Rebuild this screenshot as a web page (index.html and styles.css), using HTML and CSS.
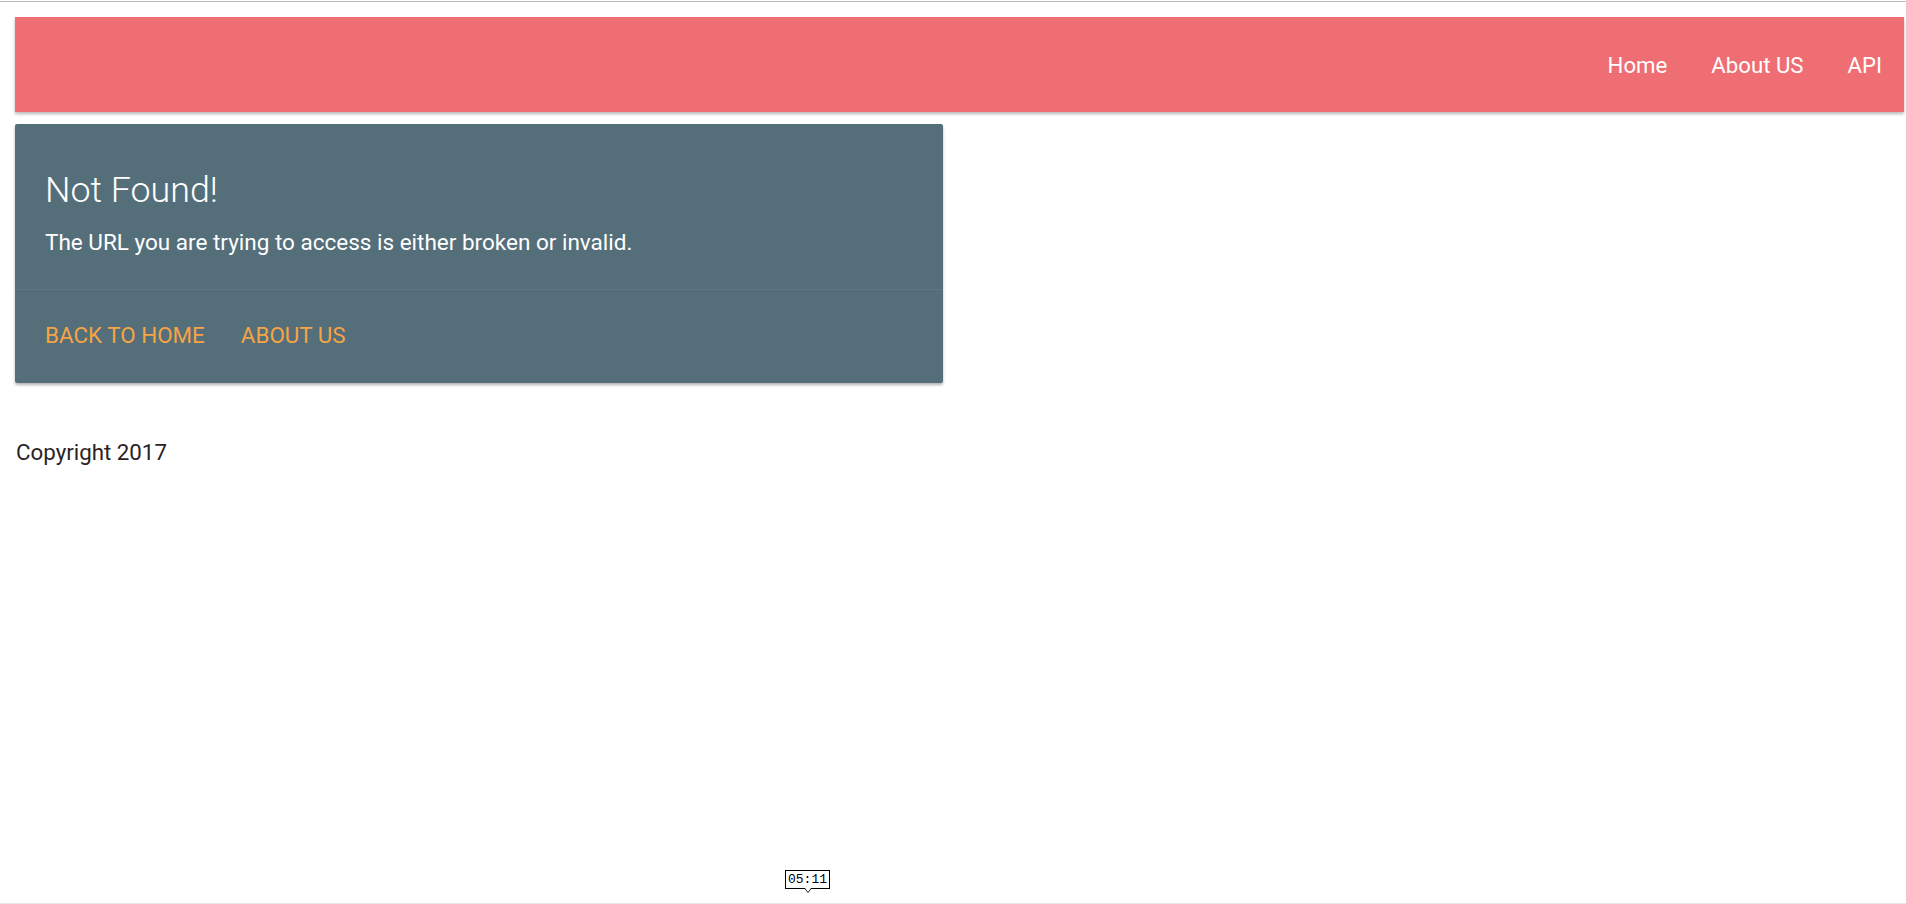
FILE: index.html
```html
<!DOCTYPE html>
<html lang="en">
<head>
<meta charset="utf-8">
<title>Not Found</title>
<link rel="stylesheet" href="styles.css">
</head>
<body>
<div class="topline"></div>
<div class="page">
  <header class="appbar">
    <nav class="nav">
      <a class="nav-link" href="#">Home</a>
      <a class="nav-link" href="#">About US</a>
      <a class="nav-link" href="#">API</a>
    </nav>
  </header>
  <section class="card">
    <div class="card-body">
      <h1 class="card-title">Not Found!</h1>
      <p class="card-text">The URL you are trying to access is either broken or invalid.</p>
    </div>
    <div class="card-actions">
      <a class="card-link" href="#">BACK TO HOME</a>
      <a class="card-link" href="#">ABOUT US</a>
    </div>
  </section>
  <footer class="footer">Copyright 2017</footer>
</div>
<div class="timestamp">05:11</div>
<div class="bottomline"></div>
</body>
</html>
```

FILE: styles.css
```css
html, body {
  margin: 0;
  padding: 0;
  background: #ffffff;
}
body {
  font-family: Roboto, "Liberation Sans", sans-serif;
  color: #212121;
  height: 904px;
  overflow: hidden;
}
.topline {
  margin-top: 1px;
  height: 1px;
  background: #bdbdbd;
}
.page {
  padding: 15px 2px 0 15px;
}
.appbar {
  height: 95px;
  background: #ef6e73;
  display: flex;
  align-items: center;
  justify-content: flex-end;
  padding-right: 22px;
  box-shadow: 0 2px 3px rgba(0,0,0,0.28);
}
.nav {
  display: flex;
  gap: 44px;
}
.nav-link {
  color: #ffffff;
  text-decoration: none;
  font-size: 22.2px;
  line-height: 30px;
}
.card {
  margin-top: 12px;
  width: 928px;
  background: #546e7a;
  border-radius: 2px;
  box-shadow: 0 2px 3px rgba(0,0,0,0.3);
  color: #ffffff;
}
.card-body {
  padding: 46px 30px 32px 30px;
  border-bottom: 1px solid #5f7884;
}
.card-title {
  margin: 0;
  font-size: 35.8px;
  font-weight: 300;
  line-height: 40px;
}
.card-text {
  margin: 17px 0 0 0;
  font-size: 22.5px;
  line-height: 30px;
}
.card-actions {
  display: flex;
  gap: 36px;
  padding: 30px 30px 33px 30px;
}
.card-link {
  color: #f6a443;
  text-decoration: none;
  font-size: 22.4px;
  line-height: 30px;
}
.footer {
  margin-top: 54px;
  padding-left: 1px;
  font-size: 22.3px;
  line-height: 30px;
  color: #2b2323;
}
.timestamp {
  position: absolute;
  left: 785px;
  top: 870px;
  width: 43px;
  height: 17px;
  border: 1px solid #000;
  background: #fff;
  font-family: "Liberation Mono", "DejaVu Sans Mono", monospace;
  font-size: 13px;
  line-height: 17px;
  text-align: center;
  color: #000;
}
.timestamp::after {
  content: "";
  position: absolute;
  left: 18px;
  top: 17px;
  width: 0;
  height: 0;
  border-left: 4px solid transparent;
  border-right: 4px solid transparent;
  border-top: 5px solid #000;
}
.timestamp::before {
  content: "";
  position: absolute;
  left: 19px;
  top: 17px;
  width: 0;
  height: 0;
  border-left: 3px solid transparent;
  border-right: 3px solid transparent;
  border-top: 4px solid #fff;
  z-index: 1;
}
.bottomline {
  position: fixed;
  left: 0;
  right: 0;
  bottom: 0;
  height: 1px;
  background: #e6e6e6;
}
```
